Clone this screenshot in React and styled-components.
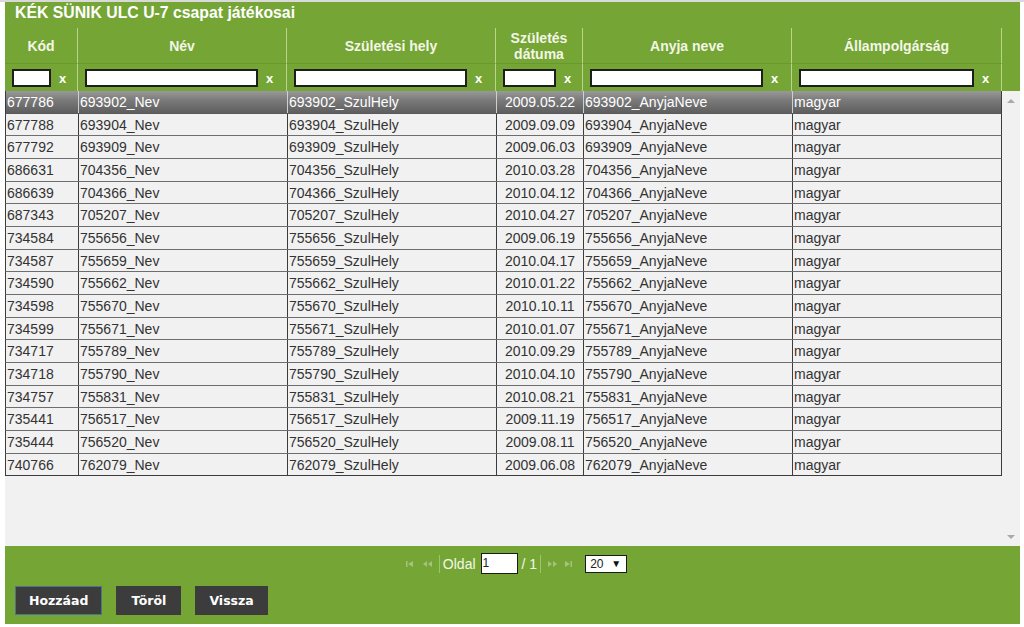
import React from "react";
import styled, { createGlobalStyle } from "styled-components";

const Global = createGlobalStyle`
  html, body { margin: 0; padding: 0; background: #fff; }
  body { font-family: "Liberation Sans", Arial, sans-serif; }
  * { box-sizing: border-box; }
`;

const COLS = "73px 209px 209px 87px 209px 210px";
const ROW_COLS = "72px 209px 209px 87px 209px 209px";
const GREEN = "#74a535";

const Page = styled.div`
  padding: 2px 0 0 5px;
  width: 1024px;
  height: 627px;
  background: linear-gradient(#d9d9d9 0, #d9d9d9 2px, #fff 2px);
`;

const Panel = styled.div`
  width: 1015px;
  height: 622px;
  background: ${GREEN};
  display: flex;
  flex-direction: column;
`;

const Title = styled.div`
  height: 26px;
  padding: 1px 0 0 10px;
  color: #fff;
  font-weight: bold;
  font-size: 15.8px;
  line-height: 20px;
`;

const HeadGrid = styled.div`
  display: grid;
  grid-template-columns: ${COLS};
  width: 997px;
`;

const HeadCell = styled.div`
  height: 36px;
  display: flex;
  align-items: center;
  justify-content: center;
  text-align: center;
  color: #f3f6e6;
  font-weight: bold;
  font-size: 14px;
  line-height: 16px;
  padding-top: 1px;
  border-right: 1px solid #b9d48f;
  border-bottom: 1px solid #669a2c;
`;

const FilterCell = styled.div`
  height: 27px;
  display: flex;
  align-items: center;
  padding: 0 0 0 7px;
  border-right: 1px solid #b9d48f;
`;

const FilterInput = styled.div`
  height: 18px;
  width: ${(p) => p.$w}px;
  background: #fff;
  border: 2px solid #1e1e1e;
`;

const Clear = styled.span`
  color: #fff;
  font-weight: bold;
  font-size: 13px;
  margin-left: 8px;
  margin-top: 2px;
`;

const BodyArea = styled.div`
  display: flex;
  height: 455px;
  background: #f1f1f1;
`;

const Rows = styled.div`
  width: 997px;
  display: flex;
  flex-direction: column;
`;

const Row = styled.div`
  display: grid;
  grid-template-columns: ${ROW_COLS};
  height: 22.67px;
  border-bottom: 1px solid ${(p) => (p.$sel ? "#5a5a5a" : "#6e6e6e")};
  border-left: 1px solid #3c3c3c;
  border-right: 1px solid #3c3c3c;
  background: ${(p) =>
    p.$sel ? "linear-gradient(#9a9a9a, #7b7b7b 40%, #5e5e5e)" : "#f1f1f1"};
  color: ${(p) => (p.$sel ? "#fff" : "#333")};
  &:last-child { border-bottom-color: #3c3c3c; }
`;

const Cell = styled.div`
  font-size: 14px;
  line-height: 23px;
  padding-left: ${(p) => (p.$center ? 0 : 1)}px;
  text-align: ${(p) => (p.$center ? "center" : "left")};
  border-left: ${(p) => (p.$first ? "0" : `1px solid ${p.$sel ? "#cfcfcf" : "#3c3c3c"}`)};
  white-space: nowrap;
  overflow: hidden;
`;

const Scroll = styled.div`
  width: 18px;
  display: flex;
  flex-direction: column;
  justify-content: space-between;
  align-items: center;
  padding: 7px 0 6px;
  background: #f1f1f1;
`;

const Footer = styled.div`
  flex: 1;
  display: flex;
  flex-direction: column;
  padding: 8px 10px 0;
`;

const Pager = styled.div`
  display: flex;
  align-items: center;
  justify-content: center;
  height: 19px;
  margin-left: 4px;
  color: #f4f7ea;
  font-size: 14px;
`;

const Sep = styled.span`
  width: 1px;
  height: 18px;
  background: #9cc46c;
  margin: 0 3px;
`;

const PageInput = styled.div`
  width: 37px;
  height: 21px;
  background: #fff;
  border: 1px solid #1a1a1a;
  color: #222;
  font-size: 12px;
  line-height: 19px;
  padding-left: 1px;
  margin: 0 4px 0 5px;
`;

const Select = styled.div`
  width: 42px;
  height: 18px;
  background: #fff;
  border: 1px solid #1a1a1a;
  color: #222;
  font-size: 12px;
  line-height: 16px;
  padding: 0 5px 0 4px;
  display: flex;
  justify-content: space-between;
  margin-left: 7px;
`;

const Arrow = styled.span`
  font-size: 10px;
  color: #111;
`;

const Buttons = styled.div`
  display: flex;
  gap: 14px;
  margin-top: 13px;
`;

const Button = styled.div`
  height: 29px;
  padding: 0 ${(p) => p.$px}px;
  background: #3d3c3d;
  border: 1px solid ${(p) => (p.$focus ? "#4d7290" : "#3d3c3d")};
  color: #fff;
  font-family: "DejaVu Sans", Verdana, sans-serif;
  font-weight: bold;
  font-size: 12.5px;
  display: flex;
  align-items: center;
`;

const data = [
  ["677786", "693902", "2009.05.22"],
  ["677788", "693904", "2009.09.09"],
  ["677792", "693909", "2009.06.03"],
  ["686631", "704356", "2010.03.28"],
  ["686639", "704366", "2010.04.12"],
  ["687343", "705207", "2010.04.27"],
  ["734584", "755656", "2009.06.19"],
  ["734587", "755659", "2010.04.17"],
  ["734590", "755662", "2010.01.22"],
  ["734598", "755670", "2010.10.11"],
  ["734599", "755671", "2010.01.07"],
  ["734717", "755789", "2010.09.29"],
  ["734718", "755790", "2010.04.10"],
  ["734757", "755831", "2010.08.21"],
  ["735441", "756517", "2009.11.19"],
  ["735444", "756520", "2009.08.11"],
  ["740766", "762079", "2009.06.08"],
];

const heads = [
  ["Kód", 39],
  ["Név", 173],
  ["Születési hely", 173],
  [<>Születés<br />dátuma</>, 53],
  ["Anyja neve", 173],
  ["Állampolgárság", 175],
];

const Tri = ({ up }) => (
  <svg width="8" height="5" viewBox="0 0 8 5">
    <path d={up ? "M0 5 L4 1 L8 5Z" : "M0 0 L4 4 L8 0Z"} fill="#a9a9a9" />
  </svg>
);

const PIcon = ({ kind }) => {
  const c = "#a3c47a";
  const shapes = {
    first: <><rect x="0" y="1" width="1.5" height="6" fill={c} /><path d="M7 1 L2 4 L7 7Z" fill={c} /></>,
    prev: <><path d="M4 1 L0 4 L4 7Z" fill={c} /><path d="M9 1 L5 4 L9 7Z" fill={c} /></>,
    next: <><path d="M0 1 L4 4 L0 7Z" fill={c} /><path d="M5 1 L9 4 L5 7Z" fill={c} /></>,
    last: <><path d="M0 1 L5 4 L0 7Z" fill={c} /><rect x="5.5" y="1" width="1.5" height="6" fill={c} /></>,
  };
  return (
    <svg width="9" height="8" viewBox="0 0 9 8" style={{ margin: "0 4px" }}>
      {shapes[kind]}
    </svg>
  );
};

export default function App() {
  return (
    <Page>
      <Global />
      <Panel>
        <Title>KÉK SÜNIK ULC U-7 csapat játékosai</Title>
        <HeadGrid>
          {heads.map(([h], i) => (
            <HeadCell key={i}>{h}</HeadCell>
          ))}
          {heads.map(([, w], i) => (
            <FilterCell key={"f" + i}>
              <FilterInput $w={w} />
              <Clear>x</Clear>
            </FilterCell>
          ))}
        </HeadGrid>
        <BodyArea>
          <Rows>
            {data.map(([k, n, d], i) => (
              <Row key={k} $sel={i === 0}>
                <Cell $first $sel={i === 0}>{k}</Cell>
                <Cell $sel={i === 0}>{n}_Nev</Cell>
                <Cell $sel={i === 0}>{n}_SzulHely</Cell>
                <Cell $sel={i === 0} $center>{d}</Cell>
                <Cell $sel={i === 0}>{n}_AnyjaNeve</Cell>
                <Cell $sel={i === 0}>magyar</Cell>
              </Row>
            ))}
          </Rows>
          <Scroll>
            <Tri up />
            <Tri />
          </Scroll>
        </BodyArea>
        <Footer>
          <Pager>
            <PIcon kind="first" />
            <PIcon kind="prev" />
            <Sep />
            <span>Oldal</span>
            <PageInput>1</PageInput>
            <span>/ 1</span>
            <Sep />
            <PIcon kind="next" />
            <PIcon kind="last" />
            <Select>
              <span>20</span>
              <Arrow>▼</Arrow>
            </Select>
          </Pager>
          <Buttons>
            <Button $focus $px={13}>Hozzáad</Button>
            <Button $px={14}>Töröl</Button>
            <Button $px={13}>Vissza</Button>
          </Buttons>
        </Footer>
      </Panel>
    </Page>
  );
}
